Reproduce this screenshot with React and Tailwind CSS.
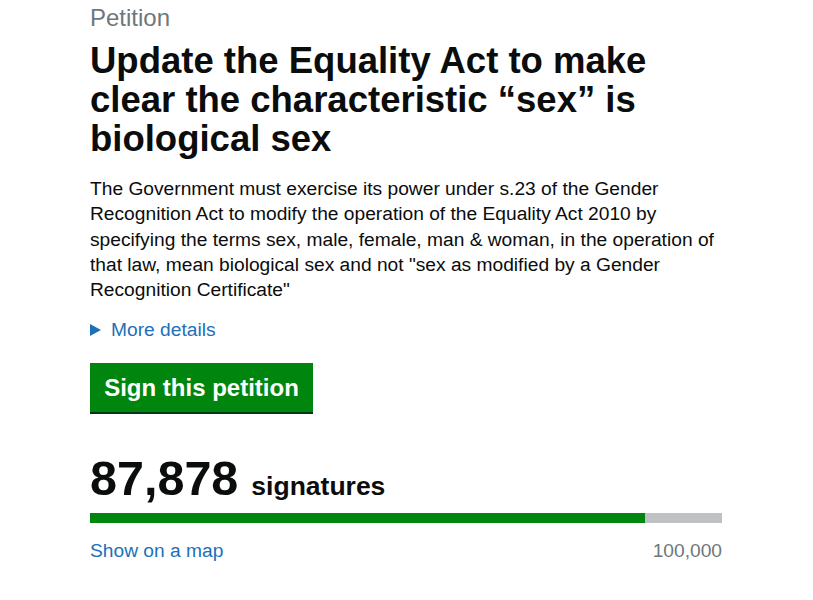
export default function App() {
  return (
    <div className="min-h-[600px] bg-white font-['Liberation_Sans',Arial,sans-serif] text-[#0b0c0c]">
      <div className="ml-[90px] w-[632px] pt-[4px]">
        <p className="text-[24px] leading-[28px] text-[#6f777b]">Petition</p>
        <h1 className="mt-[9px] text-[36.5px] font-bold leading-[39px]">
          Update the Equality Act to make clear the characteristic “sex” is biological sex
        </h1>
        <p className="mt-[18px] text-[19.2px] leading-[25.3px]">
          The Government must exercise its power under s.23 of the Gender Recognition Act to modify the operation of the Equality Act 2010 by specifying the terms sex, male, female, man &amp; woman, in the operation of that law, mean biological sex and not "sex as modified by a Gender Recognition Certificate"
        </p>
        <div className="mt-[15px] flex items-center gap-[9px] text-[19.2px] leading-[25px] text-[#1d70b8]">
          <svg width="12" height="12" viewBox="0 0 12 12" className="shrink-0">
            <polygon points="0,0 11,6 0,12" fill="#1d70b8" />
          </svg>
          <span>More details</span>
        </div>
        <button className="mt-[21px] flex h-[49px] w-[223px] items-center justify-center bg-[#00850f] text-[24px] font-bold text-white shadow-[0_2px_0_#003618]">
          Sign this petition
        </button>
        <div className="mt-[40px] flex items-baseline gap-[13px]">
          <span className="text-[48.5px] font-bold leading-[52px]">87,878</span>
          <span className="text-[26.5px] font-bold">signatures</span>
        </div>
        <div className="mt-[6px] flex h-[10px] w-full bg-[#bfc1c3]">
          <div className="h-full bg-[#00850f]" style={{ width: `${(87878 / 100000) * 100}%` }} />
        </div>
        <div className="mt-[15px] flex items-center justify-between text-[19.2px] leading-[25px]">
          <span className="text-[#1d70b8]">Show on a map</span>
          <span className="text-[#6f777b]">100,000</span>
        </div>
      </div>
    </div>
  );
}
